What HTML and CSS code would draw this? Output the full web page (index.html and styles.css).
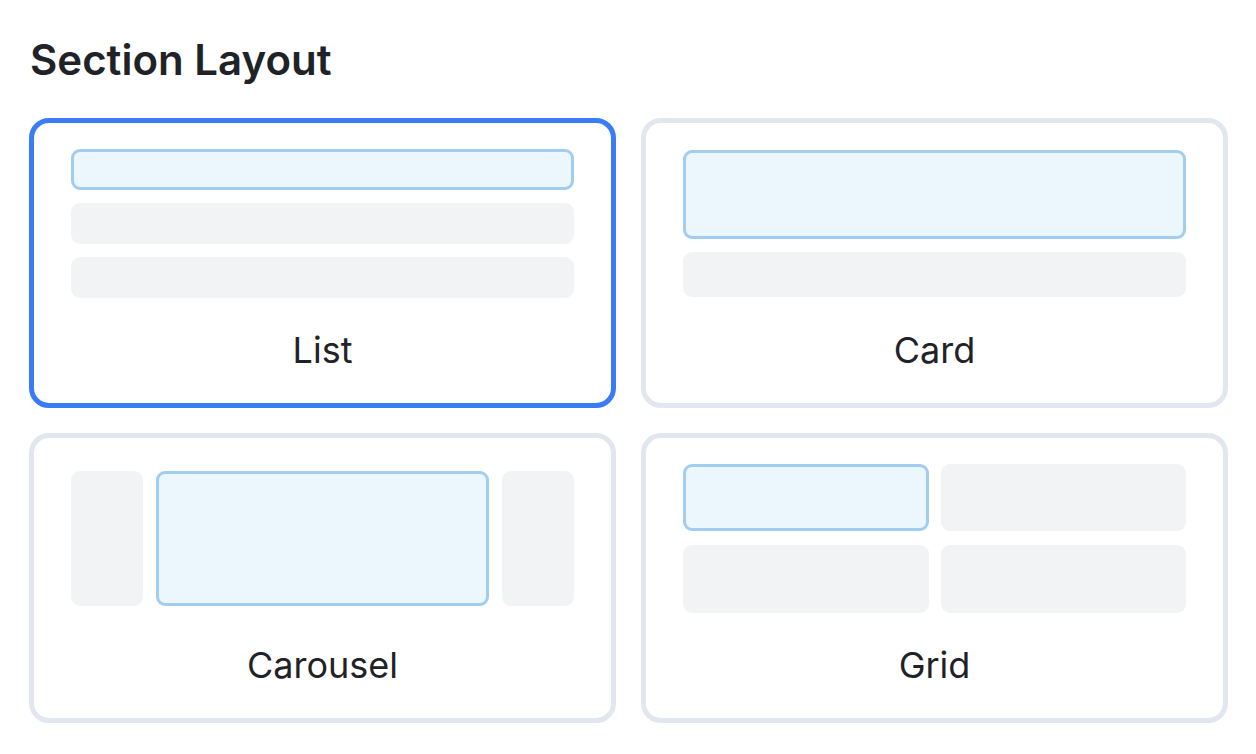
FILE: index.html
```html
<!DOCTYPE html>
<html lang="en">
<head>
<meta charset="utf-8">
<title>Section Layout</title>
<link rel="stylesheet" href="styles.css">
</head>
<body>
<main class="page">
  <h1 class="title">Section Layout</h1>
  <div class="options">
    <div class="option selected">
      <div class="preview">
        <div class="list-prev">
          <div class="blk hl"></div>
          <div class="blk"></div>
          <div class="blk"></div>
        </div>
      </div>
      <div class="label">List</div>
    </div>
    <div class="option">
      <div class="preview">
        <div class="card-prev">
          <div class="blk hl"></div>
          <div class="blk"></div>
        </div>
      </div>
      <div class="label">Card</div>
    </div>
    <div class="option">
      <div class="preview">
        <div class="carousel-prev">
          <div class="blk"></div>
          <div class="blk hl"></div>
          <div class="blk"></div>
        </div>
      </div>
      <div class="label">Carousel</div>
    </div>
    <div class="option">
      <div class="preview">
        <div class="grid-prev">
          <div class="blk hl"></div>
          <div class="blk"></div>
          <div class="blk"></div>
          <div class="blk"></div>
        </div>
      </div>
      <div class="label">Grid</div>
    </div>
  </div>
</main>
</body>
</html>
```

FILE: styles.css
```css
* { box-sizing: border-box; }
html, body { margin: 0; padding: 0; background: #ffffff; }
body {
  font-family: Inter, "Noto Sans", "Liberation Sans", sans-serif;
  color: #1f2328;
}
.page {
  padding: 34px 28px 0 29px;
}
.title {
  margin: 0 0 32px 1px;
  font-size: 42px;
  line-height: 52px;
  font-weight: 600;
  color: #1f2328;
}
.options {
  display: grid;
  grid-template-columns: 1fr 1fr;
  column-gap: 25px;
  row-gap: 25px;
}
.option {
  height: 290px;
  border: 5px solid #e2e6ef;
  border-radius: 20px;
  padding: 25px 37px 0 37px;
  display: flex;
  flex-direction: column;
  background: #fff;
}
.option.selected { border-color: #3a7cf6; }
.preview {
  height: 150px;
  display: flex;
  flex-direction: column;
  justify-content: center;
}
.label {
  margin-top: 32px;
  height: 40px;
  line-height: 40px;
  text-align: center;
  font-size: 36px;
  font-weight: 400;
  color: #1f2328;
}
.blk {
  background: #f2f3f5;
  border-radius: 9px;
}
.blk.hl {
  background: #ecf6fd;
  border: 3px solid #a0cdf0;
}
.list-prev {
  display: flex;
  flex-direction: column;
  gap: 13px;
}
.list-prev .blk { height: 41px; }
.card-prev {
  display: flex;
  flex-direction: column;
  gap: 13px;
}
.card-prev .blk { height: 45px; }
.card-prev .blk.hl { height: 89px; }
.carousel-prev {
  display: grid;
  grid-template-columns: 72px 1fr 72px;
  column-gap: 13px;
  height: 135px;
}
.grid-prev {
  display: grid;
  grid-template-columns: 1fr 1fr;
  grid-template-rows: 67px 68px;
  column-gap: 12px;
  row-gap: 14px;
}
```
